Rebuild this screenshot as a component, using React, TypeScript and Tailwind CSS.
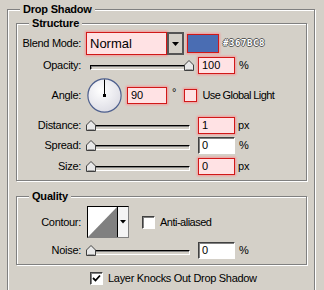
import React from "react";

const font = "font-['Liberation_Sans',Arial,sans-serif]";

const etched =
  "relative border border-[#808080] shadow-[1px_1px_0_#fff,inset_1px_1px_0_#fff]";

const Legend = ({ children }: { children: React.ReactNode }) => (
  <span className="absolute left-[12px] -top-[7px] bg-[#d4d0c8] px-[3px] text-[11px] font-bold leading-[12px] tracking-[-0.2px] text-black">
    {children}
  </span>
);

const Label = ({ children }: { children: React.ReactNode }) => (
  <div className="w-[64px] shrink-0 text-right text-[11px] leading-[13px] tracking-[-0.3px] text-black">{children}</div>
);

const Field = ({ value, hot }: { value: string; hot?: boolean }) =>
  hot ? (
    <div className="flex h-[17px] w-[37px] items-center border border-[#d01818] bg-[#ffe2e4] pl-[3px] text-[11px] shadow-[0_0_2px_1px_#f39a9a]">
      {value}
    </div>
  ) : (
    <div className="flex h-[17px] w-[37px] items-center border border-t-[#404040] border-l-[#404040] border-b-white border-r-white bg-white pl-[3px] text-[11px] shadow-[inset_1px_1px_0_#808080]">
      {value}
    </div>
  );

const Thumb = () => (
  <svg width="10" height="11" viewBox="0 0 10 11">
    <path d="M5 0.5 L9.5 5 L9.5 10.5 L0.5 10.5 L0.5 5 Z" fill="#e8e8e8" stroke="#404040" strokeWidth="1" />
    <path d="M1.5 9.5 L8.5 9.5" stroke="#a0a0a0" />
  </svg>
);

const Slider = ({ atEnd }: { atEnd?: boolean }) => (
  <div className="relative h-[11px] w-[108px] shrink-0">
    <div className="absolute left-[4px] right-[4px] top-[5px] h-[5px] border border-t-black border-l-black border-b-white border-r-white bg-[#d4d0c8] shadow-[inset_1px_1px_0_#808080]" />
    <div className={"absolute top-0 " + (atEnd ? "right-0" : "left-0")}>
      <Thumb />
    </div>
  </div>
);

const Check = ({ checked, hot }: { checked?: boolean; hot?: boolean }) => (
  <div
    className={
      "flex h-[13px] w-[13px] shrink-0 items-center justify-center border " +
      (hot
        ? "border-[#d01818] bg-[#ffe2e4] shadow-[0_0_2px_1px_#f39a9a]"
        : "border-t-[#404040] border-l-[#404040] border-b-white border-r-white bg-white shadow-[inset_1px_1px_0_#808080]")
    }
  >
    {checked && (
      <svg width="9" height="9" viewBox="0 0 9 9">
        <path d="M1 4 L3.5 6.5 L8 1.5" fill="none" stroke="#000" strokeWidth="1.8" />
      </svg>
    )}
  </div>
);

const AngleDial = () => (
  <svg width="35" height="35" viewBox="0 0 35 35" className="shrink-0">
    <defs>
      <radialGradient id="dial" cx="0.4" cy="0.35" r="0.7">
        <stop offset="0" stopColor="#ffffff" />
        <stop offset="1" stopColor="#dcdce4" />
      </radialGradient>
    </defs>
    <circle cx="17.5" cy="17.5" r="16.6" fill="url(#dial)" stroke="#4d5f8e" strokeWidth="1.2" />
    <line x1="17.5" y1="17.5" x2="17.5" y2="1.5" stroke="#000" strokeWidth="1" />
    <rect x="16" y="16" width="3" height="3" fill="#000" />
  </svg>
);

const Contour = () => (
  <div className="flex h-[32px] w-[42px] shrink-0 border border-t-black border-l-black border-b-[#808080] border-r-[#808080] bg-white">
    <svg width="29" height="30" viewBox="0 0 29 30">
      <rect x="0" y="0" width="29" height="30" fill="#fff" />
      <path d="M0 30 L29 0 L29 30 Z" fill="#808080" />
    </svg>
    <div className="flex flex-1 items-center justify-center border-l border-black bg-[#f4f4f4]">
      <svg width="6" height="4" viewBox="0 0 6 4">
        <path d="M0 0 L6 0 L3 3.5 Z" fill="#000" />
      </svg>
    </div>
  </div>
);

export default function App() {
  return (
    <div className={"h-[290px] w-[324px] overflow-hidden bg-[#d4d0c8] text-black " + font}>
      <div className="pl-[7px] pt-[9px]">
        <div className={etched + " h-[300px] w-[308px]"}>
          <Legend>Drop Shadow</Legend>

          <div className="pl-[8px] pt-[13px]">
            <div className={etched + " h-[158px] w-[291px]"}>
              <Legend>Structure</Legend>

              <div className="flex flex-col pt-[8px]">
                <div className="flex h-[23px] items-center gap-[5px]">
                  <Label>Blend Mode:</Label>
                  <div className="flex h-[23px] w-[98px] shrink-0">
                    <div className="flex flex-1 items-center border border-[#d01818] bg-[#ffe2e4] pl-[3px] text-[13px] shadow-[0_0_2px_1px_#f39a9a]">
                      Normal
                    </div>
                    <div className="flex w-[17px] items-center justify-center border-2 border-[#555] bg-[#d4d0c8]">
                      <svg width="7" height="4" viewBox="0 0 7 4">
                        <path d="M0 0 L7 0 L3.5 4 Z" fill="#000" />
                      </svg>
                    </div>
                  </div>
                  <div className="ml-[-2px] h-[19px] w-[32px] shrink-0 border border-[#d01818] bg-[#4a6db3] shadow-[0_0_2px_1px_#f39a9a]" />
                  <span className="ml-[-1px] font-['DejaVu_Sans_Mono',monospace] text-[9px] font-bold tracking-[0.6px] text-white [text-shadow:1px_0_#5a5a5a,-1px_0_#5a5a5a,0_1px_#5a5a5a,0_-1px_#5a5a5a]">
                    #367BC8
                  </span>
                </div>

                <div className="mt-[2px] flex h-[17px] items-center gap-[5px]">
                  <Label>Opacity:</Label>
                  <Slider atEnd />
                  <div className="ml-[-1px]">
                    <Field value="100" hot />
                  </div>
                  <span className="ml-[-1px] text-[11px]">%</span>
                </div>

                <div className="mt-[4px] flex h-[35px] items-center gap-[5px]">
                  <Label>Angle:</Label>
                  <div className="ml-[1px]">
                    <AngleDial />
                  </div>
                  <div className="flex h-[17px] w-[40px] items-center border border-[#d01818] bg-[#ffe2e4] pl-[3px] text-[11px] shadow-[0_0_2px_1px_#f39a9a]">
                    90
                  </div>
                  <span className="mt-[-6px] text-[11px]">°</span>
                  <div className="ml-[3px] flex items-center gap-[5px]">
                    <Check hot />
                    <span className="text-[11px] tracking-[-0.6px]">Use Global Light</span>
                  </div>
                </div>

                <div className="mt-[4px] flex h-[17px] items-center gap-[5px]">
                  <Label>Distance:</Label>
                  <Slider />
                  <div className="ml-[-1px]">
                    <Field value="1" hot />
                  </div>
                  <span className="ml-[-2px] text-[11px]">px</span>
                </div>

                <div className="mt-[3px] flex h-[17px] items-center gap-[5px]">
                  <Label>Spread:</Label>
                  <Slider />
                  <div className="ml-[-1px]">
                    <Field value="0" />
                  </div>
                  <span className="ml-[-1px] text-[11px]">%</span>
                </div>

                <div className="mt-[4px] flex h-[17px] items-center gap-[5px]">
                  <Label>Size:</Label>
                  <Slider />
                  <div className="ml-[-1px]">
                    <Field value="0" hot />
                  </div>
                  <span className="ml-[-2px] text-[11px]">px</span>
                </div>
              </div>
            </div>

            <div className={etched + " mt-[15px] h-[69px] w-[291px]"}>
              <Legend>Quality</Legend>

              <div className="flex flex-col pt-[9px]">
                <div className="flex h-[32px] items-center gap-[5px]">
                  <Label>Contour:</Label>
                  <div className="ml-[1px]">
                    <Contour />
                  </div>
                  <div className="ml-[8px] flex items-center gap-[5px]">
                    <Check />
                    <span className="text-[11px] tracking-[-0.5px]">Anti-aliased</span>
                  </div>
                </div>

                <div className="mt-[4px] flex h-[17px] items-center gap-[5px]">
                  <Label>Noise:</Label>
                  <Slider />
                  <div className="ml-[-1px]">
                    <Field value="0" />
                  </div>
                  <span className="ml-[-1px] text-[11px]">%</span>
                </div>
              </div>
            </div>

            <div className="mt-[7px] flex h-[13px] items-center gap-[5px] pl-[74px]">
              <Check checked />
              <span className="text-[11px] tracking-[-0.3px]">Layer Knocks Out Drop Shadow</span>
            </div>
          </div>
        </div>
      </div>
    </div>
  );
}
